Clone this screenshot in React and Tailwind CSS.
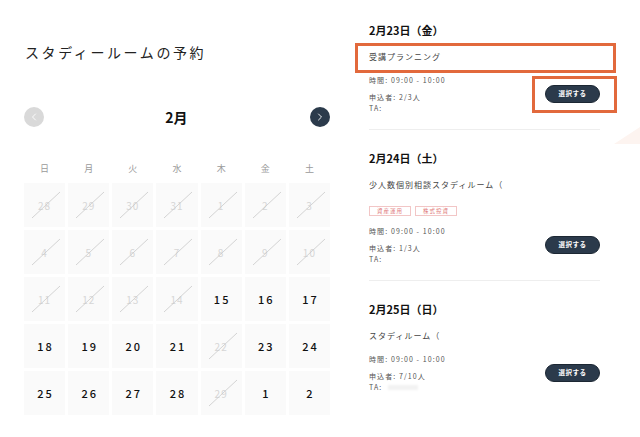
import React from "react";
import { ChevronLeft, ChevronRight } from "lucide-react";

const weekdays = ["日", "月", "火", "水", "木", "金", "土"];

// [day, available]
const weeks = [
  [[28, 0], [29, 0], [30, 0], [31, 0], [1, 0], [2, 0], [3, 0]],
  [[4, 0], [5, 0], [6, 0], [7, 0], [8, 0], [9, 0], [10, 0]],
  [[11, 0], [12, 0], [13, 0], [14, 0], [15, 1], [16, 1], [17, 1]],
  [[18, 1], [19, 1], [20, 1], [21, 1], [22, 0], [23, 1], [24, 1]],
  [[25, 1], [26, 1], [27, 1], [28, 1], [29, 0], [1, 1], [2, 1]],
];

const slots = [
  { date: "2月23日（金）", title: "受講プランニング", tags: [], count: "2/3人", marked: true },
  {
    date: "2月24日（土）",
    title: "少人数個別相談スタディルーム（",
    tags: ["資産運用", "株式投資"],
    count: "1/3人",
  },
  { date: "2月25日（日）", title: "スタディルーム（", tags: [], count: "7/10人", hiddenTa: true },
];

const DayCell = ({ day, open }) => (
  <div className="relative h-[44px] bg-[#fafafa] flex items-center justify-center">
    {open ? (
      <span className="text-[11px] font-medium tracking-[2px] pl-[2px] text-[#111]">{day}</span>
    ) : (
      <>
        <span className="text-[10px] tracking-[1px] text-[#d6d6d6]">{day}</span>
        <svg className="absolute inset-0" width="41" height="44" viewBox="0 0 41 44">
          <line x1="8" y1="35" x2="36" y2="9" stroke="#c9c9c9" strokeWidth="0.8" />
        </svg>
      </>
    )}
  </div>
);

const Slot = ({ slot, first, last }) => (
  <div
    className={`${first ? "pt-[22px]" : "pt-[20px]"} pb-[15px] ${last ? "" : "border-b border-[#eeeeee]"}`}
  >
    <div className="text-[11px] leading-[16px] font-bold text-[#111]">{slot.date}</div>
    <div className="relative mt-[12px] text-[8px] leading-[14px] tracking-[1px] text-[#444]">
      {slot.title}
      {slot.marked && (
        <div className="absolute -left-[14px] -top-[7px] w-[261px] h-[30px] border-[3px] border-[#e2693c]"></div>
      )}
    </div>
    {slot.tags.length > 0 && (
      <div className="flex gap-[4px] mt-[14px]">
        {slot.tags.map((t) => (
          <span
            key={t}
            className="w-[42px] h-[10px] flex items-center justify-center border border-[#f2c6c6] text-[5.5px] tracking-[1px] text-[#e07b7b]"
          >
            {t}
          </span>
        ))}
      </div>
    )}
    <div className={`flex items-center justify-between ${slot.tags.length ? "mt-[9px]" : "mt-[10px]"}`}>
      <div className="text-[7px] tracking-[1.1px] text-[#555]">
        <div className="leading-[12px]">時間: 09:00 - 10:00</div>
        <div className="leading-[11px] mt-[6px]">申込者: {slot.count}</div>
        <div className="leading-[11px] flex items-center">
          TA:
          {slot.hiddenTa && (
            <span className="ml-[6px] w-[30px] h-[5px] bg-[#f2f2f2] blur-[1px]"></span>
          )}
        </div>
      </div>
      <div className="relative">
        <button className="w-[55px] h-[18px] rounded-full bg-[#2b3a4b] border border-[#1c2733] text-white text-[6.5px] font-bold tracking-[0.5px] flex items-center justify-center">
          選択する
        </button>
        {slot.marked && (
          <div className="absolute -left-[13px] -top-[9px] w-[85px] h-[37px] border-[3px] border-[#e2693c]"></div>
        )}
      </div>
    </div>
  </div>
);

export default function App() {
  return (
    <div className="relative flex w-[640px] h-[437px] overflow-hidden bg-white font-['Noto_Sans_CJK_JP','Liberation_Sans',sans-serif]">
      <div className="ml-[24px] w-[306px] pt-[42px]">
        <h1 className="pl-[1px] text-[14px] leading-[20px] tracking-[2.6px] text-[#222]">
          スタディールームの予約
        </h1>
        <div className="mt-[45px] h-[20px] flex items-center justify-between">
          <div className="w-[20px] h-[20px] rounded-full bg-[#d9d9d9] flex items-center justify-center text-white">
            <ChevronLeft size={12} strokeWidth={1.8} />
          </div>
          <div className="text-[14px] font-bold leading-[20px] text-[#111] mr-[1px]">2月</div>
          <div className="w-[20px] h-[20px] rounded-full bg-[#2b3a4b] flex items-center justify-center text-white">
            <ChevronRight size={12} strokeWidth={1.8} />
          </div>
        </div>
        <div className="mt-[36px] grid grid-cols-7 gap-x-[3px]">
          {weekdays.map((w) => (
            <div key={w} className="text-center text-[9px] leading-[12px] text-[#9a9a9a]">
              {w}
            </div>
          ))}
        </div>
        <div className="mt-[8px] grid grid-cols-7 gap-[3px]">
          {weeks.flat().map(([d, o], i) => (
            <DayCell key={i} day={d} open={o} />
          ))}
        </div>
      </div>
      <div className="ml-[39px] w-[231px]">
        {slots.map((s, i) => (
          <Slot key={i} slot={s} first={i === 0} last={i === slots.length - 1} />
        ))}
      </div>
      <div className="absolute left-[614px] top-[127px] w-[26px] h-[17px] bg-[#fdf4f0] [clip-path:polygon(100%_0,100%_100%,0_100%)]"></div>
    </div>
  );
}
